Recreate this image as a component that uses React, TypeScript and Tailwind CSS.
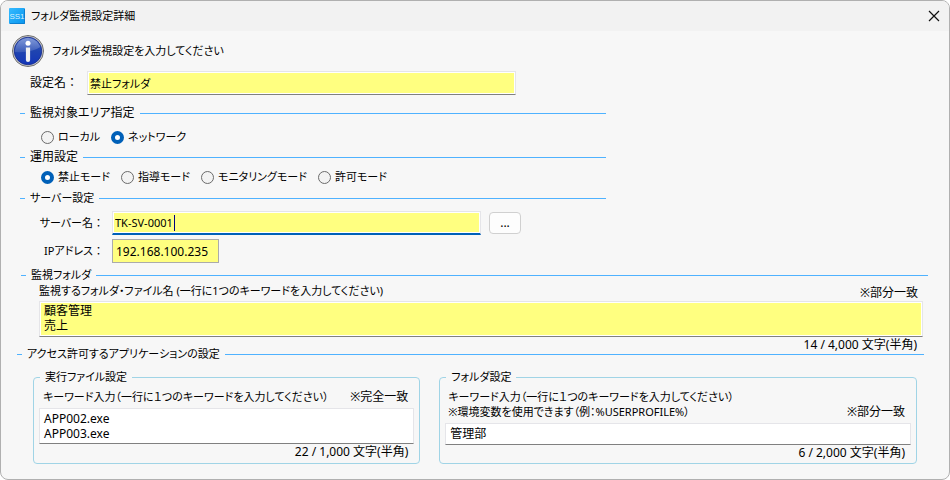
import React, { useState } from 'react';

interface SectionTitleProps {
  title: string;
  className?: string;
}

interface RadioGroupProps {
  name: string;
  label: string;
  options: string[];
  value: string;
  onChange: (value: string) => void;
}

const fieldClass =
  'block border border-[#e5e5e9] shadow-[inset_0_0_0_1px_#fff] outline-none resize-none';

const AREAS = ['ローカル', 'ネットワーク'];
const MODES = ['禁止モード', '指導モード', 'モニタリングモード', '許可モード'];

const SectionTitle: React.FC<SectionTitleProps> = ({ title, className = 'text-xs' }) => (
  <h2 className={`flex h-4 items-center gap-[5px] ${className}`}>
    <span className="w-[5px] border-t border-[#4fb2ff]" />
    <span className="leading-4">{title}</span>
    <span className="flex-1 border-t border-[#4fb2ff]" />
  </h2>
);

const RadioGroup: React.FC<RadioGroupProps> = ({ name, label, options, value, onChange }) => (
  <div role="radiogroup" aria-label={label} className="flex h-5 items-center gap-[11px] pl-[21px] text-[11px]">
    {options.map((option) => (
      <label key={option} className="flex items-center gap-1">
        <input
          type="radio"
          name={name}
          checked={value === option}
          onChange={() => onChange(option)}
          className="size-[13px] appearance-none rounded-full border border-[#6b6b6b] bg-[#f3f3f3] checked:border-4 checked:border-[#0060b8] checked:bg-white"
        />
        <span>{option}</span>
      </label>
    ))}
  </div>
);

const Colon = () => <span className="[font-feature-settings:normal]">：</span>;

const AppIcon = () => (
  <svg viewBox="0 0 16 16" className="size-4" aria-hidden="true">
    <defs>
      <linearGradient id="appFill" x1="0" y1="0" x2="1" y2="1">
        <stop offset="0" stopColor="#35baff" />
        <stop offset="1" stopColor="#0795ee" />
      </linearGradient>
    </defs>
    <rect width="16" height="16" rx="1" fill="url(#appFill)" />
    <path d="M15.5 1v14.5H1" fill="none" stroke="#0b7fd0" />
    <text x="8" y="11" textAnchor="middle" fontSize="8" fill="#d9f3ff" fontFamily="Liberation Sans, sans-serif">SS1</text>
  </svg>
);

const InfoIcon = () => (
  <svg viewBox="0 0 32 32" className="size-8" aria-hidden="true">
    <defs>
      <linearGradient id="infoFill" x1="0" y1="0" x2="0" y2="1">
        <stop offset="0" stopColor="#3c62c4" />
        <stop offset="0.5" stopColor="#1f44b0" />
        <stop offset="1" stopColor="#1235b8" />
      </linearGradient>
      <linearGradient id="infoShine" x1="0" y1="0" x2="0" y2="1">
        <stop offset="0" stopColor="#fff" stopOpacity="0.35" />
        <stop offset="1" stopColor="#fff" stopOpacity="0.12" />
      </linearGradient>
    </defs>
    <circle cx="16" cy="16" r="15.5" fill="#d0d0d0" stroke="#6e6e6e" />
    <circle cx="16" cy="16" r="13.8" fill="url(#infoFill)" stroke="#15298a" strokeWidth="0.8" />
    <path d="M3 17A13 13 0 0 1 28.3 12Q20 18 3 17Z" fill="url(#infoShine)" />
    <circle cx="16" cy="8.2" r="2.5" fill="#fff" />
    <path d="M13.9 12.5h4.2V25a2.1 2.1 0 0 1-4.2 0Z" fill="#f1f1f1" />
  </svg>
);

const App: React.FC = () => {
  const [name, setName] = useState('禁止フォルダ');
  const [area, setArea] = useState('ネットワーク');
  const [mode, setMode] = useState('禁止モード');
  const [server, setServer] = useState('TK-SV-0001');
  const [ip, setIp] = useState('192.168.100.235');
  const [folders, setFolders] = useState('顧客管理\n売上');
  const [apps, setApps] = useState('APP002.exe\nAPP003.exe');
  const [allowed, setAllowed] = useState('管理部');

  return (
    <div className="min-h-screen overflow-hidden whitespace-nowrap rounded-lg border border-[#b0b0b0] bg-[#f7f7f7] font-['Noto_Sans','Noto_Sans_CJK_JP',sans-serif] text-xs leading-4 text-black [font-feature-settings:'palt']">
      <header className="flex h-[30px] items-center gap-1.5 bg-[#f2f2f2] pl-2 pr-[9px]">
        <AppIcon />
        <h1 className="flex-1 text-[11px]">フォルダ監視設定詳細</h1>
        <button type="button" aria-label="閉じる">
          <svg viewBox="0 0 12 12" className="size-3" aria-hidden="true">
            <path d="M1 1l10 10M11 1L1 11" stroke="#111" strokeWidth="1.2" fill="none" />
          </svg>
        </button>
      </header>

      <main className="pt-1">
        <div className="flex items-center gap-2 pl-[11px]">
          <InfoIcon />
          <p className="text-[11px]">フォルダ監視設定を入力してください</p>
        </div>

        <div className="mt-1 flex max-w-[515px] items-center pl-[29px]">
          <label htmlFor="name" className="w-[57px]">設定名<Colon /></label>
          <input
            id="name"
            value={name}
            onChange={(e) => setName(e.target.value)}
            className={`${fieldClass} h-6 flex-1 border-b-[#808080] bg-[#ffff80] px-0.5 text-[11px]`}
          />
        </div>

        <div className="mt-2.5 max-w-[605px] pl-[19px]">
          <SectionTitle title="監視対象エリア指定" />
          <div className="pt-1.5 pb-0.5">
            <RadioGroup name="area" label="監視対象エリア指定" options={AREAS} value={area} onChange={setArea} />
          </div>
          <SectionTitle title="運用設定" />
          <div className="pt-0.5 pb-[3px]">
            <RadioGroup name="mode" label="運用設定" options={MODES} value={mode} onChange={setMode} />
          </div>
          <SectionTitle title="サーバー設定" className="text-[11px]" />
        </div>

        <div className="mt-[5px] flex max-w-[520px] items-center">
          <label htmlFor="server" className="w-[111px] pr-2 text-right text-[11px]">サーバー名<Colon /></label>
          <div className="relative flex-1">
            <input
              id="server"
              value={server}
              onChange={(e) => setServer(e.target.value)}
              className={`${fieldClass} h-6 w-full border-b-2 border-b-[#0060b8] bg-[#ffff80] px-0.5 text-[11px]`}
            />
            <span className="absolute top-1 left-[62px] h-4 w-px bg-[#000080]" />
          </div>
          <button type="button" className="ml-2 h-[22px] w-8 rounded border border-[#d0d0d0] bg-[#fdfdfd]">
            ...
          </button>
        </div>

        <div className="mt-1 flex items-center">
          <label htmlFor="ip" className="w-[111px] pr-2 text-right text-[11px]">IPアドレス<Colon /></label>
          <input
            id="ip"
            value={ip}
            onChange={(e) => setIp(e.target.value)}
            className="h-6 w-[107px] border border-[#ababab] bg-[#ffff80] px-[3px] outline-none"
          />
        </div>

        <section className="mt-1 pl-5 pr-[21px]">
          <SectionTitle title="監視フォルダ" className="text-[11px]" />
          <div className="pl-[18px] pr-[5px]">
            <div className="flex justify-between pr-[5px]">
              <label htmlFor="folders" className="text-[11px]">監視するフォルダ・ファイル名 (一行に1つのキーワードを入力してください)</label>
              <span className="pt-0.5 [font-feature-settings:normal]">※部分一致</span>
            </div>
            <textarea
              id="folders"
              rows={2}
              value={folders}
              onChange={(e) => setFolders(e.target.value)}
              className={`${fieldClass} h-9 w-full overflow-hidden border-b-[#808080] bg-[#ffff80] px-1 py-px leading-[15px]`}
            />
            <p className="pr-1.5 text-right">14 / 4,000 文字(半角)</p>
          </div>
        </section>

        <section className="-mt-[7px] pl-4 pr-[25px]">
          <SectionTitle title="アクセス許可するアプリケーションの設定" className="text-[11px]" />
          <div className="flex gap-[19px] pt-[7px] pl-4 pr-[7px]">
            <fieldset className="min-w-0 flex-[386] rounded border border-[#a0d4e6] px-[5px] pb-0.5">
              <legend className="ml-px px-[5px] text-[11px] leading-4">実行ファイル設定</legend>
              <div className="flex justify-between pl-1 pr-1.5 pt-1">
                <label htmlFor="apps" className="text-[11px]">キーワード入力（一行に１つのキーワードを入力してください）</label>
                <span className="[font-feature-settings:normal]">※完全一致</span>
              </div>
              <textarea
                id="apps"
                rows={2}
                value={apps}
                onChange={(e) => setApps(e.target.value)}
                className={`${fieldClass} mt-[3px] h-9 w-full overflow-hidden border-b-[#808080] bg-white px-1 py-0.5 leading-[15px]`}
              />
              <p className="pr-1.5 text-right">22 / 1,000 文字(半角)</p>
            </fieldset>

            <fieldset className="min-w-0 flex-[479] rounded border border-[#a0d4e6] px-[5px] pb-0.5">
              <legend className="ml-px px-[5px] text-[11px] leading-4">フォルダ設定</legend>
              <div className="flex items-end justify-between pl-[3px] pr-1.5 pt-1 leading-[15px]">
                <label htmlFor="allowed" className="text-[11px]">
                  キーワード入力（一行に１つのキーワードを入力してください）
                  <br />
                  ※環境変数を使用できます（例：%USERPROFILE%）
                </label>
                <span className="[font-feature-settings:normal]">※部分一致</span>
              </div>
              <textarea
                id="allowed"
                rows={1}
                value={allowed}
                onChange={(e) => setAllowed(e.target.value)}
                className={`${fieldClass} mt-1 h-[22px] w-full overflow-hidden border-b-[#808080] bg-white px-1 py-0.5 leading-4`}
              />
              <p className="pr-1.5 text-right">6 / 2,000 文字(半角)</p>
            </fieldset>
          </div>
        </section>
      </main>
    </div>
  );
};

export default App;
